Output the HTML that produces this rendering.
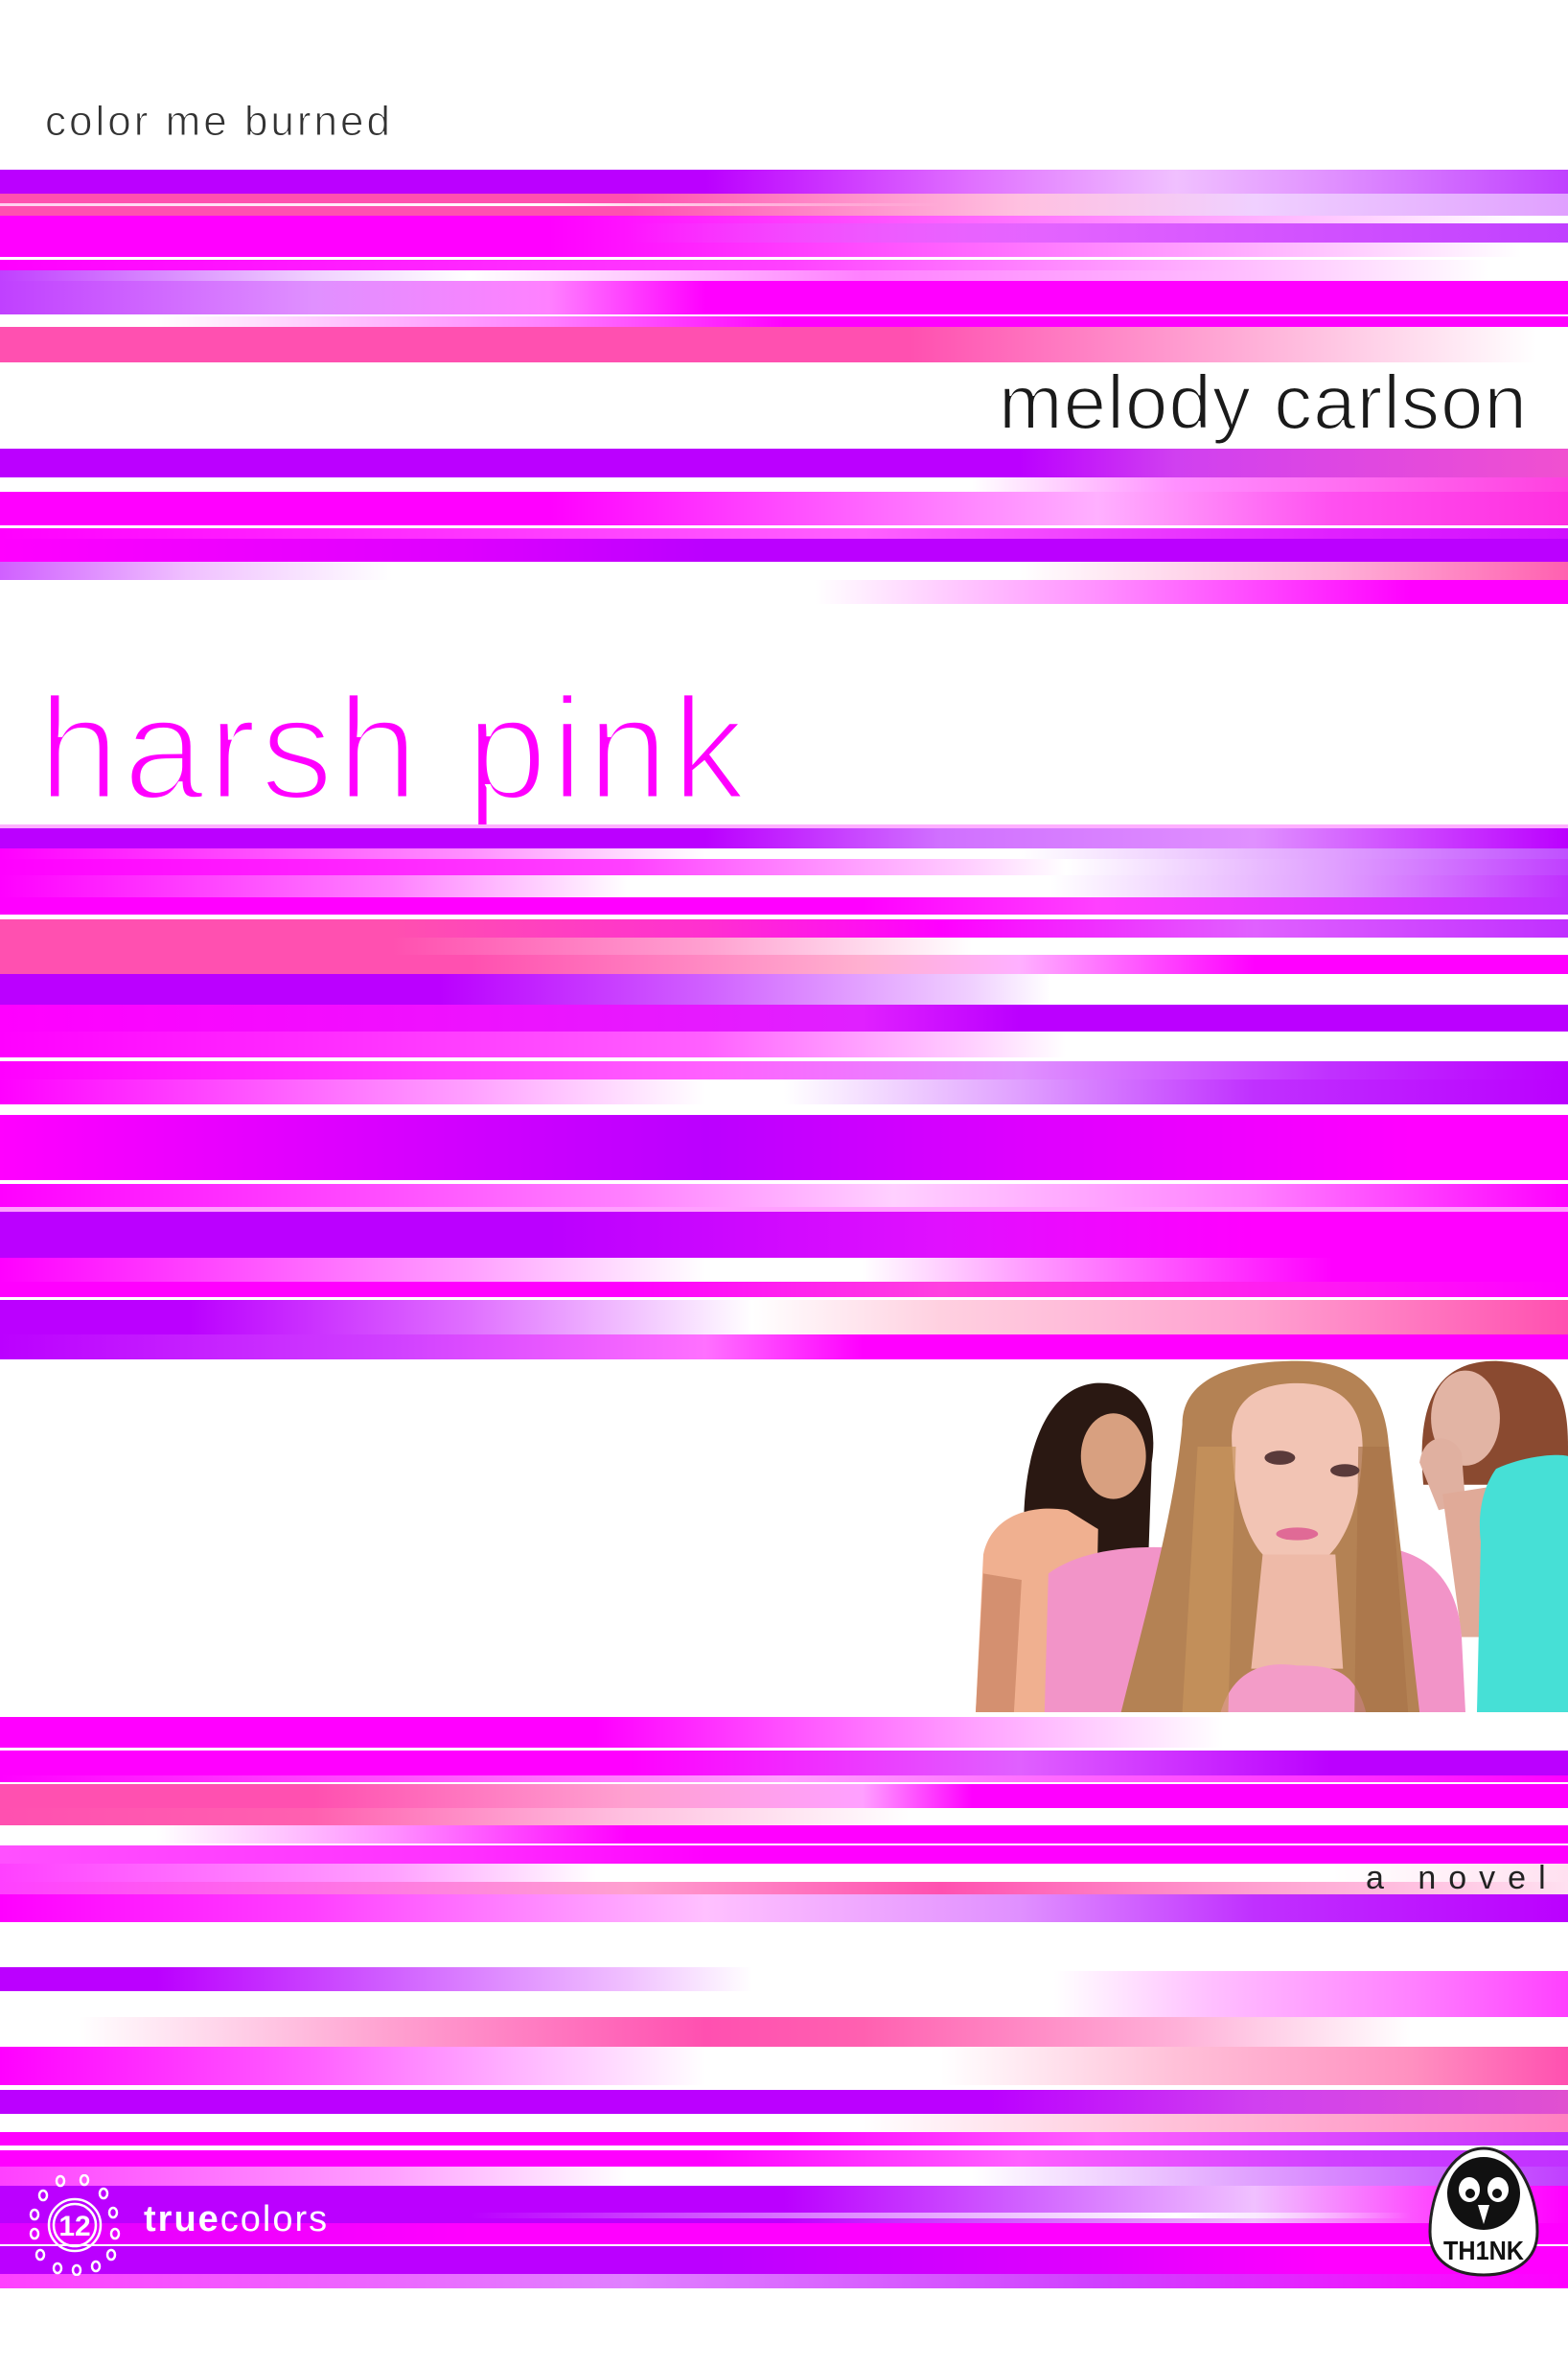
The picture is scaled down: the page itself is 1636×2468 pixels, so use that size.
<!DOCTYPE html>
<html><head><meta charset="utf-8">
<style>
*{margin:0;padding:0;box-sizing:border-box}
html,body{width:1636px;height:2468px;background:#fff;overflow:hidden}
body{position:relative;font-family:"Liberation Sans",sans-serif}
.s{position:absolute;left:0;width:1636px}
.t{position:absolute;white-space:nowrap}
</style></head><body>

<div class="t" style="left:47px;top:102px;font-size:44px;color:#333;letter-spacing:3px;-webkit-text-stroke:1px #fff">color me burned</div>

<!-- band 1 -->
<div class="s" style="top:177px;height:25px;background:linear-gradient(90deg,#bb00ff 0,#bb00ff 45%,#e070ff 62%,#f0c0ff 75%,#e090ff 85%,#c040ff 100%)"></div>
<div class="s" style="top:202px;height:23px;background:linear-gradient(90deg,#ff50b0 0,#ff50b0 40%,#ffc0e0 65%,#f0d0ff 80%,#e0a0ff 100%)"></div>
<div class="s" style="top:212px;height:3px;background:linear-gradient(90deg,#ffd0f0 0,#fff 35%,rgba(255,255,255,0) 60%)"></div>
<div class="s" style="top:225px;height:43px;background:linear-gradient(90deg,#ff00ff 0,#ff00ff 35%,#ff60ff 60%,#ffb0ff 80%,#fff 97%)"></div>
<div class="s" style="top:233px;height:20px;background:linear-gradient(90deg,rgba(255,0,255,0) 0,rgba(255,0,255,0) 40%,#e060ff 70%,#c040ff 100%)"></div>
<div class="s" style="top:271px;height:11px;background:linear-gradient(90deg,#ff00ff 0,#ff40ff 50%,#ffc0ff 80%,#fff 95%)"></div>
<div class="s" style="top:282px;height:11px;background:linear-gradient(90deg,#c040ff 0,#f0d0ff 20%,#fff 30%,#ff80ff 55%,#ffc0ff 80%,#fff 95%)"></div>
<div class="s" style="top:293px;height:35px;background:linear-gradient(90deg,#c040ff 0,#e090ff 20%,#ff80ff 35%,#ff00ff 45%,#ff00ff 100%)"></div>
<div class="s" style="top:330px;height:11px;background:linear-gradient(90deg,#fff 0,#fff 10%,#ff80ff 35%,#ff00ff 50%,#ff00ff 100%)"></div>
<div class="s" style="top:341px;height:37px;background:linear-gradient(90deg,#ff50b0 0,#ff50b0 58%,#ffb0d8 80%,#fff 98%)"></div>

<div class="t" style="right:42px;top:374px;font-size:80px;color:#1a1a1a;letter-spacing:1px;-webkit-text-stroke:2px #fff">melody carlson</div>

<!-- band 2 -->
<div class="s" style="top:468px;height:30px;background:linear-gradient(90deg,#bb00ff 0,#bb00ff 65%,#d040f0 75%,#f050d0 100%)"></div>
<div class="s" style="top:498px;height:15px;background:linear-gradient(90deg,#fff 0,#fff 62%,#ff90ff 75%,#ff40e0 100%)"></div>
<div class="s" style="top:513px;height:35px;background:linear-gradient(90deg,#ff00ff 0,#ff00ff 35%,#ffb0ff 70%,#ff50f0 85%,#ff30e0 100%)"></div>
<div class="s" style="top:551px;height:11px;background:linear-gradient(90deg,#ff00ff 0,#ff60ff 55%,#e020ff 85%,#d010ff 100%)"></div>
<div class="s" style="top:562px;height:24px;background:linear-gradient(90deg,#ff00ff 0,#dd00ff 30%,#bb00ff 45%,#bb00ff 100%)"></div>
<div class="s" style="top:586px;height:19px;background:linear-gradient(90deg,#d060ff 0,#f0c0ff 12%,#fff 25%,#fff 65%,#ffb0d8 85%,#ff60b0 100%)"></div>
<div class="s" style="top:605px;height:25px;background:linear-gradient(90deg,#fff 0,#fff 52%,#ff90ff 70%,#ff00ff 90%,#ff00ff 100%)"></div>

<div class="t" style="left:40px;top:690px;font-size:152px;color:#ff00ff;letter-spacing:4px;line-height:1.2;-webkit-text-stroke:5px #fff">harsh pink</div>

<!-- band 3 -->
<div class="s" style="top:860px;height:4px;background:#ffb0ff"></div>
<div class="s" style="top:864px;height:21px;background:linear-gradient(90deg,#bb00ff 0,#bb00ff 45%,#d070ff 60%,#e090ff 80%,#bb00ff 100%)"></div>
<div class="s" style="top:885px;height:11px;background:linear-gradient(90deg,#ff00ff 0,#ff90ff 30%,#fff 45%,#fff 65%,#e0a0ff 85%,#c050ff 100%)"></div>
<div class="s" style="top:896px;height:17px;background:linear-gradient(90deg,#ff00ff 0,#ff40ff 40%,#ffd0ff 62%,#fff 68%,#e0a0ff 85%,#c040ff 100%)"></div>
<div class="s" style="top:913px;height:23px;background:linear-gradient(90deg,#ff00ff 0,#ff80ff 25%,#fff 40%,#fff 67%,#e0a0ff 85%,#c030ff 100%)"></div>
<div class="s" style="top:936px;height:18px;background:linear-gradient(90deg,#ff00ff 0,#ff00ff 55%,#ff40ff 70%,#c030ff 100%)"></div>
<div class="s" style="top:959px;height:19px;background:linear-gradient(90deg,#ff50b0 0,#ff50b0 25%,#ff30d0 45%,#ff00ff 60%,#e060ff 80%,#c030ff 100%)"></div>
<div class="s" style="top:978px;height:18px;background:linear-gradient(90deg,#ff50b0 0,#ff50b0 25%,#ffa0d0 45%,#fff 62%,#fff 100%)"></div>
<div class="s" style="top:996px;height:20px;background:linear-gradient(90deg,#ff50b0 0,#ff50b0 30%,#ffb0d0 55%,#ffb0ff 65%,#ff00ff 80%,#ff00ff 100%)"></div>
<div class="s" style="top:1016px;height:32px;background:linear-gradient(90deg,#bb00ff 0,#bb00ff 28%,#d060ff 45%,#f0d0ff 62%,#fff 67%,#fff 100%)"></div>
<div class="s" style="top:1048px;height:28px;background:linear-gradient(90deg,#ff00ff 0,#e020ff 55%,#bb00ff 65%,#bb00ff 100%)"></div>
<div class="s" style="top:1076px;height:27px;background:linear-gradient(90deg,#ff00ff 0,#ff60ff 45%,#ffd0ff 62%,#fff 68%,#fff 100%)"></div>
<div class="s" style="top:1107px;height:19px;background:linear-gradient(90deg,#ff00ff 0,#ff60ff 45%,#e090ff 65%,#c030ff 85%,#bb00ff 100%)"></div>
<div class="s" style="top:1126px;height:26px;background:linear-gradient(90deg,#ff00ff 0,#ffa0ff 30%,#fff 45%,#fff 50%,#e0a0ff 65%,#c030ff 80%,#bb00ff 100%)"></div>
<div class="s" style="top:1163px;height:68px;background:linear-gradient(90deg,#ff00ff 0,#d000ff 30%,#bb00ff 45%,#dd00ff 65%,#ff00ff 90%)"></div>
<div class="s" style="top:1235px;height:24px;background:linear-gradient(90deg,#ff00ff 0,#ff80ff 40%,#ffd0ff 57%,#ff80ff 80%,#ff00ff 100%)"></div>
<div class="s" style="top:1259px;height:5px;background:#ffa0ff"></div>
<div class="s" style="top:1264px;height:48px;background:linear-gradient(90deg,#bb00ff 0,#bb00ff 35%,#e010ff 60%,#ff00ff 80%,#ff00ff 100%)"></div>
<div class="s" style="top:1312px;height:25px;background:linear-gradient(90deg,#ff00ff 0,#ffa0ff 30%,#fff 45%,#fff 55%,#ffa0ff 65%,#ff00ff 85%)"></div>
<div class="s" style="top:1337px;height:16px;background:linear-gradient(90deg,#ff00ff 0,#ff00ff 40%,#ff40e0 60%,#ff00ff 100%)"></div>
<div class="s" style="top:1356px;height:36px;background:linear-gradient(90deg,#bb00ff 0,#bb00ff 12%,#e070ff 30%,#fff 48%,#ffd0e0 60%,#ffa0d0 80%,#ff50b0 100%)"></div>
<div class="s" style="top:1392px;height:26px;background:linear-gradient(90deg,#bb00ff 0,#d040ff 25%,#ff70ff 45%,#ff00ff 55%,#ff00ff 100%)"></div>

<!-- photo -->
<svg style="position:absolute;left:1010px;top:1418px" width="626" height="368" viewBox="0 25 1568 1112" preserveAspectRatio="none">
<rect x="0" y="0" width="1568" height="1137" fill="#fff"/>
<path d="M150 650 C130 400 180 120 330 100 C450 90 500 200 480 350 L470 700 L300 720 Z" fill="#2a1812"/>
<ellipse cx="380" cy="330" rx="85" ry="135" fill="#d8a080"/>
<path d="M40 640 C60 520 160 480 260 500 L340 560 L330 1137 L20 1137 Z" fill="#f0b090"/>
<path d="M40 700 L20 1137 L120 1137 L140 720 Z" fill="#d49070"/>
<path d="M1190 420 C1170 150 1230 30 1380 30 C1530 40 1568 120 1568 300 L1568 420 Z" fill="#8a4a30"/>
<ellipse cx="1300" cy="210" rx="90" ry="150" fill="#e2b4a4"/>
<path d="M1180 350 C1190 260 1260 250 1290 320 L1300 480 L1230 500 Z" fill="#e0b0a0"/>
<path d="M1240 450 L1400 420 L1400 900 L1290 900 Z" fill="#e0aa98"/>
<path d="M1380 370 C1450 330 1540 320 1568 330 L1568 1137 L1330 1137 L1340 600 C1330 500 1350 420 1380 370 Z" fill="#46e0d6"/>
<path d="M210 700 C300 620 450 610 550 620 L1100 620 C1200 640 1280 720 1290 900 L1300 1137 L200 1137 Z" fill="#f294c8"/>
<path d="M560 230 C560 80 700 30 860 30 C1020 30 1090 120 1100 300 L1180 1137 L400 1137 C470 800 540 500 560 230 Z" fill="#b48254"/>
<path d="M690 300 C680 150 760 100 860 100 C980 100 1040 180 1030 330 C1020 560 950 680 860 690 C760 690 700 550 690 300 Z" fill="#f2c4b4"/>
<path d="M770 640 L960 640 L980 1000 L740 1000 Z" fill="#eebaa8"/>
<path d="M660 1137 C700 980 800 980 860 990 C950 990 1010 1000 1040 1137 Z" fill="#f39cc8"/>
<path d="M600 300 L700 300 L680 1137 L560 1137 Z" fill="#c8945c" opacity=".7"/>
<path d="M1020 300 L1100 300 L1150 1137 L1010 1137 Z" fill="#a87448" opacity=".7"/>
<ellipse cx="815" cy="335" rx="40" ry="22" fill="#5a3a3a"/>
<ellipse cx="985" cy="375" rx="38" ry="20" fill="#5a3a3a"/>
<ellipse cx="860" cy="575" rx="55" ry="20" fill="#e06a96"/>
</svg>

<!-- band 4 -->
<div class="s" style="top:1791px;height:32px;background:linear-gradient(90deg,#ff00ff 0,#ff00ff 38%,#ffa0ff 62%,#fff 78%,#fff 100%)"></div>
<div class="s" style="top:1826px;height:26px;background:linear-gradient(90deg,#ff00ff 0,#ff00ff 40%,#e060ff 65%,#bb00ff 85%,#bb00ff 100%)"></div>
<div class="s" style="top:1852px;height:7px;background:linear-gradient(90deg,#ff00ff 0,#ffa0ff 50%,#ff00ff 100%)"></div>
<div class="s" style="top:1861px;height:25px;background:linear-gradient(90deg,#ff50b0 0,#ff50b0 20%,#ffa0d0 40%,#ffa0ff 55%,#ff00ff 62%,#ff00ff 100%)"></div>
<div class="s" style="top:1886px;height:18px;background:linear-gradient(90deg,#ff50b0 0,#ff60b0 20%,#ffc0e0 40%,#fff 58%,#fff 100%)"></div>
<div class="s" style="top:1904px;height:19px;background:linear-gradient(90deg,#fff 0,#fff 10%,#ff90ff 25%,#ff00ff 40%,#ff00ff 100%)"></div>
<div class="s" style="top:1925px;height:19px;background:linear-gradient(90deg,#ff50ff 0,#ff30ff 30%,#ff00ff 45%,#ff00ff 100%)"></div>
<div class="s" style="top:1944px;height:19px;background:linear-gradient(90deg,#ff40ff 0,#ffa0ff 25%,#fff 38%,#fff 85%,#ffe0f0 100%)"></div>
<div class="s" style="top:1963px;height:13px;background:linear-gradient(90deg,#ff40ff 0,#ffa0d0 40%,#ff50b0 60%,#ffa0d0 80%,#ffe0f0 100%)"></div>
<div class="s" style="top:1976px;height:29px;background:linear-gradient(90deg,#ff00ff 0,#ff40ff 20%,#ffc0ff 45%,#e090ff 65%,#c030ff 80%,#bb00ff 100%)"></div>
<div class="t" style="left:1425px;top:1940px;font-size:34px;color:#222;letter-spacing:13px">a novel</div>

<!-- band 5 -->
<div class="s" style="top:2052px;height:25px;background:linear-gradient(90deg,#bb00ff 0,#bb00ff 10%,#d060ff 25%,#f0c0ff 40%,#fff 48%,#fff 100%)"></div>
<div class="s" style="top:2056px;height:49px;left:1100px;width:536px;background:linear-gradient(90deg,#fff 0,#ffc0ff 30%,#ff80ff 70%,#ff40ff 100%)"></div>
<div class="s" style="top:2104px;height:31px;background:linear-gradient(90deg,#fff 0,#fff 5%,#ffa0d0 25%,#ff50b0 45%,#ff60b0 55%,#ffb0d8 75%,#fff 90%,#fff 100%)"></div>
<div class="s" style="top:2135px;height:40px;background:linear-gradient(90deg,#ff00ff 0,#ff60ff 20%,#ffc0ff 35%,#fff 45%,#fff 60%,#ffc0d8 75%,#ff90c0 90%,#ff50b0 100%)"></div>
<div class="s" style="top:2180px;height:25px;background:linear-gradient(90deg,#bb00ff 0,#bb00ff 63%,#d040f0 80%,#e050d0 100%)"></div>
<div class="s" style="top:2205px;height:19px;background:linear-gradient(90deg,#fff 0,#fff 55%,#ffc0d8 75%,#ff80c0 100%)"></div>
<div class="s" style="top:2224px;height:14px;background:linear-gradient(90deg,#ff00ff 0,#ff00ff 50%,#ff60ff 70%,#d040ff 90%,#c030ff 100%)"></div>
<div class="s" style="top:2243px;height:17px;background:linear-gradient(90deg,#ff00ff 0,#ff00ff 45%,#ff60ff 65%,#d040ff 85%,#c030ff 100%)"></div>
<div class="s" style="top:2260px;height:20px;background:linear-gradient(90deg,#ff40ff 0,#ffa0ff 25%,#fff 40%,#fff 62%,#e0a0ff 80%,#c040ff 100%)"></div>
<div class="s" style="top:2280px;height:39px;background:linear-gradient(90deg,#bb00ff 0,#bb00ff 50%,#d060ff 65%,#f0c0ff 80%,#ff40ff 92%,#ff00ff 100%)"></div>
<div class="s" style="top:2308px;height:6px;background:linear-gradient(90deg,rgba(255,255,255,0) 0,rgba(255,255,255,0) 30%,#e090ff 55%,#fff 75%,rgba(255,255,255,0) 90%)"></div>
<div class="s" style="top:2319px;height:22px;background:linear-gradient(90deg,#e000ff 0,#ff00ff 30%,#ff00ff 100%)"></div>
<div class="s" style="top:2341px;height:2px;background:#fff"></div>
<div class="s" style="top:2343px;height:29px;background:linear-gradient(90deg,#bb00ff 0,#bb00ff 45%,#e000ff 70%,#ff00ff 85%,#ff00ff 100%)"></div>
<div class="s" style="top:2372px;height:15px;background:linear-gradient(90deg,#ff40ff 0,#e080ff 40%,#d040ff 70%,#ff00ff 100%)"></div>

<!-- truecolors logo -->
<svg style="position:absolute;left:28px;top:2268px" width="104" height="106" viewBox="0 0 104 106">
<g fill="none" stroke="#fff" stroke-width="2.5">
<circle cx="50" cy="53" r="27"/><circle cx="50" cy="53" r="22"/>
<ellipse cx="35" cy="7" rx="4" ry="5"/><ellipse cx="60" cy="6" rx="4" ry="5"/>
<ellipse cx="17" cy="22" rx="4" ry="5"/><ellipse cx="80" cy="20" rx="4" ry="5"/>
<ellipse cx="8" cy="42" rx="4" ry="5"/><ellipse cx="90" cy="40" rx="4" ry="5"/>
<ellipse cx="8" cy="62" rx="4" ry="5"/><ellipse cx="92" cy="62" rx="4" ry="5"/>
<ellipse cx="14" cy="84" rx="4" ry="5"/><ellipse cx="88" cy="84" rx="4" ry="5"/>
<ellipse cx="32" cy="98" rx="4" ry="5"/><ellipse cx="52" cy="100" rx="4" ry="5"/><ellipse cx="72" cy="96" rx="4" ry="5"/>
</g>
<text x="50" y="64" text-anchor="middle" font-family="Liberation Sans,sans-serif" font-size="30" font-weight="bold" fill="#fff">12</text>
</svg>
<div class="t" style="left:150px;top:2294px;font-size:38px;color:#fff;letter-spacing:2px"><b>true</b>colors</div>

<!-- THINK logo -->
<svg style="position:absolute;left:1488px;top:2238px" width="120" height="138" viewBox="0 0 120 138">
<path d="M60 3 C95 3 116 50 116 90 C116 120 92 135 60 135 C28 135 4 120 4 90 C4 50 25 3 60 3 Z" fill="#fff" stroke="#222" stroke-width="3"/>
<circle cx="60" cy="50" r="38" fill="#111"/>
<ellipse cx="45" cy="46" rx="11" ry="13" fill="#fff"/><ellipse cx="75" cy="46" rx="11" ry="13" fill="#fff"/>
<circle cx="46" cy="50" r="5" fill="#111"/><circle cx="74" cy="50" r="5" fill="#111"/>
<path d="M54 62 L60 82 L66 62 Z" fill="#fff"/>
<text x="60" y="119" text-anchor="middle" font-family="Liberation Sans,sans-serif" font-size="28" font-weight="bold" fill="#111" textLength="84" lengthAdjust="spacingAndGlyphs">TH1NK</text>
</svg>

</body></html>
